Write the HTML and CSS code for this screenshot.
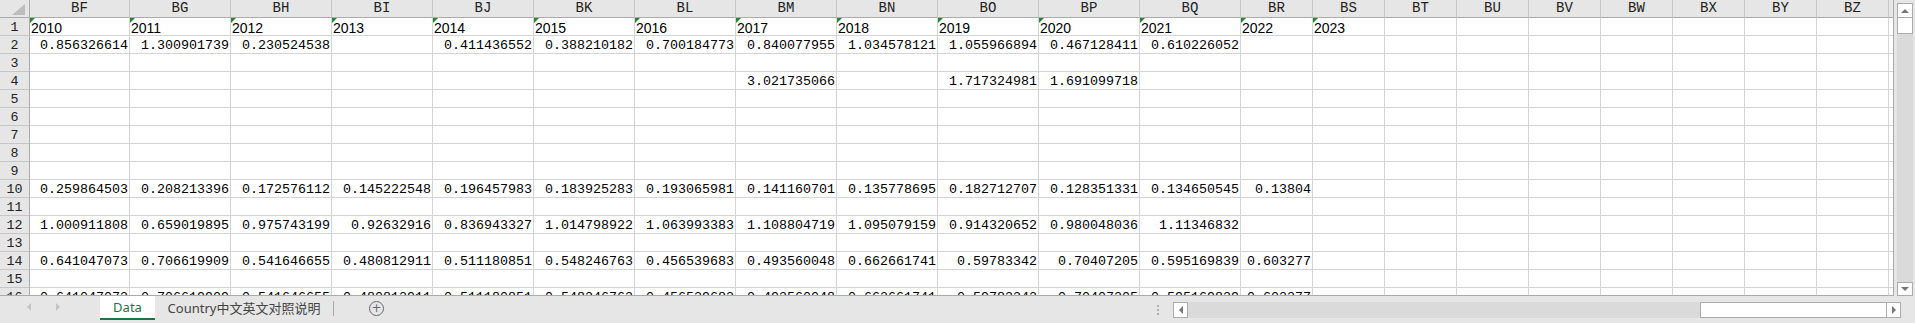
FILE: index.html
```html
<!DOCTYPE html>
<html lang="zh">

<head>
    <meta charset="UTF-8">
    <meta name="viewport" content="width=device-width, initial-scale=1.0">
    <title>Data</title>
    <link rel="stylesheet" href="styles.css">
</head>

<body>
    <div id="workbook">
        <div id="sheet-area">
            <div id="grid"></div>

            <div id="vscroll">
                <div class="sbtn"><span class="arrow-up"></span></div>
                <div class="vthumb"></div>
                <div class="vtrack"></div>
                <div class="sbtn sbtn-last"><span class="arrow-down"></span></div>
            </div>
        </div>

        <div id="tabbar">
            <div class="tab-nav">
                <span class="arrow-left light"></span>
                <span class="arrow-right light"></span>
            </div>
            <div class="tab active">Data</div>
            <div class="tab">Country中文英文对照说明</div>
            <div class="tab-sep"></div>
            <div class="add-sheet">+</div>

            <div class="splitter">
                <span></span><span></span><span></span>
            </div>

            <div id="hscroll">
                <div class="sbtn"><span class="arrow-left"></span></div>
                <div class="htrack"></div>
                <div class="hthumb"></div>
                <div class="sbtn"><span class="arrow-right"></span></div>
            </div>
        </div>
    </div>

    <script>
        const columns = ['BF', 'BG', 'BH', 'BI', 'BJ', 'BK', 'BL', 'BM', 'BN', 'BO', 'BP', 'BQ',
            'BR', 'BS', 'BT', 'BU', 'BV', 'BW', 'BX', 'BY', 'BZ'];

        const row14 = ['0.641047073', '0.706619909', '0.541646655', '0.480812911', '0.511180851',
            '0.548246763', '0.456539683', '0.493560048', '0.662661741', '0.59783342',
            '0.70407205', '0.595169839', '0.603277'];

        // values per row, in column order starting at BF
        const data = {
            2: ['0.856326614', '1.300901739', '0.230524538', '', '0.411436552', '0.388210182',
                '0.700184773', '0.840077955', '1.034578121', '1.055966894', '0.467128411', '0.610226052'],
            4: ['', '', '', '', '', '', '', '3.021735066', '', '1.717324981', '1.691099718'],
            10: ['0.259864503', '0.208213396', '0.172576112', '0.145222548', '0.196457983',
                '0.183925283', '0.193065981', '0.141160701', '0.135778695', '0.182712707',
                '0.128351331', '0.134650545', '0.13804'],
            12: ['1.000911808', '0.659019895', '0.975743199', '0.92632916', '0.836943327',
                '1.014798922', '1.063993383', '1.108804719', '1.095079159', '0.914320652',
                '0.980048036', '1.11346832'],
            14: row14,
            16: row14
        };

        function makeCell(className, text) {
            const cell = document.createElement('div');
            cell.className = 'cell ' + className;
            cell.textContent = text;
            return cell;
        }

        function buildGrid() {
            const grid = document.getElementById('grid');

            // column letters
            const head = document.createElement('div');
            head.className = 'row head';
            head.appendChild(makeCell('corner', ''));
            columns.forEach(function (name) {
                head.appendChild(makeCell('colname', name));
            });
            head.appendChild(makeCell('colname', ''));
            grid.appendChild(head);

            for (let r = 1; r <= 16; r++) {
                const row = document.createElement('div');
                row.className = 'row';
                row.appendChild(makeCell('rownum', r));

                const values = data[r] || [];
                columns.forEach(function (name, i) {
                    if (r === 1 && i < 14) {
                        row.appendChild(makeCell('text', 2010 + i));
                    } else {
                        row.appendChild(makeCell('num', values[i] || ''));
                    }
                });
                row.appendChild(makeCell('num', ''));
                grid.appendChild(row);
            }
        }

        buildGrid();
    </script>
</body>

</html>
```

FILE: styles.css
```css
body {
    margin: 0;
    width: 1915px;
    height: 323px;
    overflow: hidden;
    background-color: #e6e6e6;
    font-family: "Liberation Mono", monospace;
    color: #000;
}

#workbook {
    display: flex;
    flex-direction: column;
}

#sheet-area {
    display: flex;
    height: 296px;
}

/* spreadsheet grid */
#grid {
    width: 1894px;
    height: 296px;
    box-sizing: border-box;
    border-right: 1px solid #ababab;
    border-bottom: 1px solid #ababab;
    background-color: #ffffff;
    overflow: hidden;
}

.row {
    display: grid;
    grid-template-columns: 30px 100px repeat(11, 101px) repeat(9, 72px) 4px;
    height: 18px;
}

.cell {
    position: relative;
    box-sizing: border-box;
    display: flex;
    align-items: flex-end;
    justify-content: flex-end;
    padding-right: 1px;
    border-right: 1px solid #d4d4d4;
    border-bottom: 1px solid #d4d4d4;
    font-size: 13.33px;
    line-height: 14px;
    white-space: nowrap;
    overflow: hidden;
}

.row .cell:last-child {
    border-right: none;
}

.cell.text {
    justify-content: flex-start;
    padding-left: 1px;
    font-family: "Liberation Sans", Arial, sans-serif;
    font-size: 14px;
}

/* green "number stored as text" marker */
.cell.text::before {
    content: "";
    position: absolute;
    top: 0;
    left: 0;
    border-top: 5px solid #1e8a2c;
    border-right: 5px solid transparent;
}

.head .cell {
    background-color: #e6e6e6;
    border-right-color: #c6c6c6;
    border-bottom-color: #ababab;
    justify-content: center;
    align-items: center;
    padding: 0;
    font-size: 14px;
    line-height: 17px;
    color: #222;
}

.cell.rownum {
    background-color: #e6e6e6;
    border-right-color: #ababab;
    border-bottom-color: #c6c6c6;
    justify-content: center;
    padding: 0;
    color: #222;
}

.head .cell.corner {
    border-right-color: #ababab;
}

.cell.corner::after {
    content: "";
    position: absolute;
    right: 4px;
    bottom: 2px;
    border-left: 13px solid transparent;
    border-bottom: 11px solid #bcbcbc;
}

/* scrollbars */
#vscroll {
    width: 21px;
    height: 296px;
    box-sizing: border-box;
    padding: 3px 2px 0 3px;
    display: flex;
    flex-direction: column;
}

.vtrack {
    flex: 1;
    background-color: #dadada;
}

.sbtn {
    width: 16px;
    height: 15px;
    box-sizing: border-box;
    border: 1px solid #ababab;
    background-color: #ffffff;
    display: flex;
    align-items: center;
    justify-content: center;
}

.sbtn-last {
    height: 14px;
}

.vthumb {
    width: 16px;
    height: 16px;
    box-sizing: border-box;
    border: 1px solid #ababab;
    border-top: none;
    background-color: #ffffff;
}

.arrow-up,
.arrow-down,
.arrow-left,
.arrow-right {
    width: 0;
    height: 0;
}

.arrow-up {
    border-left: 4px solid transparent;
    border-right: 4px solid transparent;
    border-bottom: 4px solid #777;
}

.arrow-down {
    border-left: 4px solid transparent;
    border-right: 4px solid transparent;
    border-top: 4px solid #777;
}

.arrow-left {
    border-top: 4px solid transparent;
    border-bottom: 4px solid transparent;
    border-right: 4px solid #777;
}

.arrow-right {
    border-top: 4px solid transparent;
    border-bottom: 4px solid transparent;
    border-left: 4px solid #777;
}

.arrow-left.light {
    border-right-color: #c4c4c4;
}

.arrow-right.light {
    border-left-color: #c4c4c4;
}

/* sheet tabs */
#tabbar {
    display: flex;
    align-items: flex-start;
    height: 27px;
    font-family: "Noto Sans", "Noto Sans CJK SC", sans-serif;
    font-size: 13px;
}

.tab-nav {
    width: 100px;
    height: 22px;
    display: flex;
    align-items: center;
    gap: 25px;
    padding-left: 27px;
    box-sizing: border-box;
}

.tab {
    height: 22px;
    width: 178px;
    display: flex;
    align-items: center;
    justify-content: center;
    color: #444;
}

.tab.active {
    width: 55px;
    background-color: #ffffff;
    color: #217346;
    border-bottom: 2px solid #217346;
}

.tab-sep {
    width: 1px;
    height: 15px;
    margin-top: 5px;
    background-color: #ababab;
}

.add-sheet {
    width: 13px;
    height: 13px;
    margin: 5px 0 0 35px;
    border: 1px solid #666;
    border-radius: 50%;
    color: #666;
    font-family: "DejaVu Sans", sans-serif;
    font-size: 12px;
    line-height: 13px;
    text-align: center;
}

.splitter {
    display: flex;
    flex-direction: column;
    gap: 2px;
    margin: 9px 0 0 773px;
}

.splitter span {
    width: 2px;
    height: 2px;
    background-color: #b0b0b0;
}

#hscroll {
    display: flex;
    width: 728px;
    height: 16px;
    margin: 6px 0 0 14px;
    background-color: #dadada;
}

#hscroll .sbtn {
    height: 16px;
    width: 15px;
}

.htrack {
    flex: 1;
}

.hthumb {
    width: 186px;
    height: 16px;
    box-sizing: border-box;
    border: 1px solid #ababab;
    border-right: none;
    background-color: #ffffff;
}
```
